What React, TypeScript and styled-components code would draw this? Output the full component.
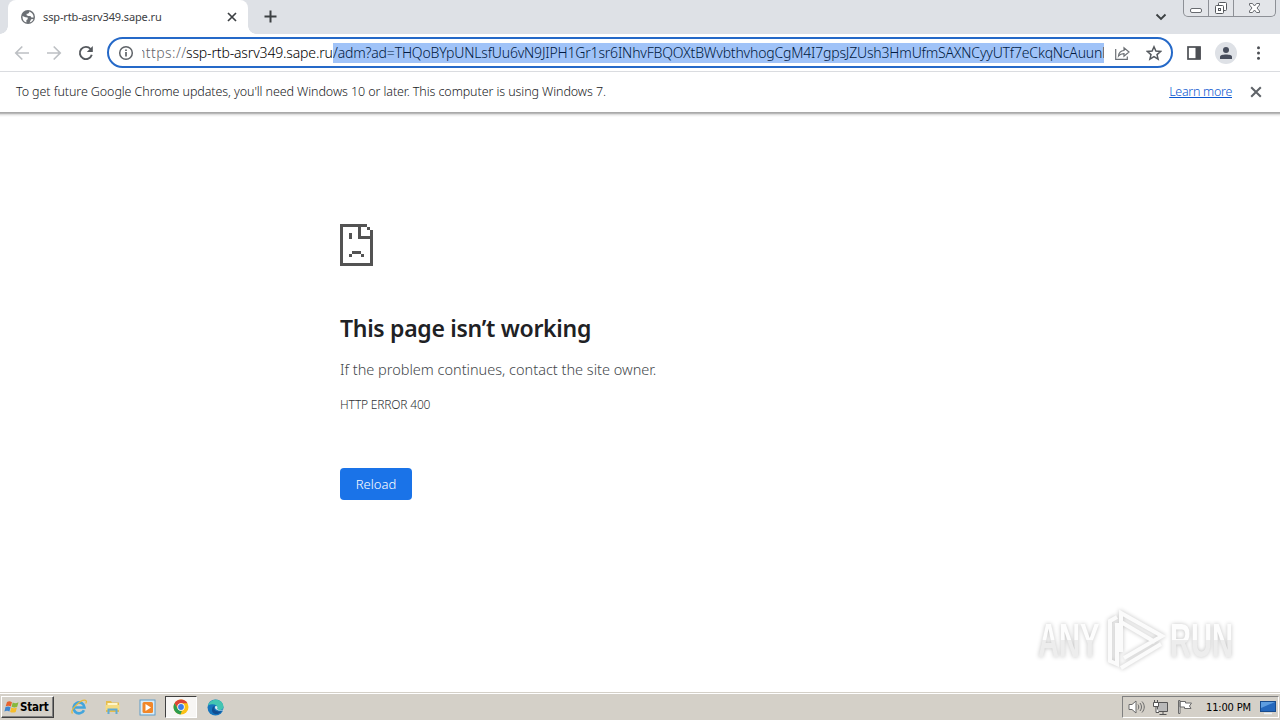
import React from 'react';
import styled, { createGlobalStyle } from 'styled-components';

const GlobalStyle = createGlobalStyle`
	* {
		box-sizing: border-box;
	}

	body {
		margin: 0;
		overflow: hidden;
		background: #fff;
	}

	svg {
		display: block;
		flex: none;
	}
`;

const uiFont = `'Noto Sans', 'Open Sans', sans-serif`;
const tahoma = `'DejaVu Sans Condensed', 'DejaVu Sans', sans-serif`;

const Screen = styled.div`
	display: flex;
	flex-direction: column;
	width: 1280px;
	height: 720px;
	font-family: ${uiFont};
	background: #fff;
`;

/* ---------- tab strip ---------- */

const TabStrip = styled.header`
	display: flex;
	align-items: flex-start;
	height: 34px;
	background: #dee1e6;
`;

const TabCorner = styled.div<{ $side: 'left' | 'right' }>`
	align-self: flex-end;
	width: 8px;
	height: 8px;
	background: radial-gradient(
		circle at ${(props) => (props.$side === 'left' ? '0 0' : '100% 0')},
		#dee1e6 7.5px,
		#fff 8px
	);
`;

const Tab = styled.div`
	display: flex;
	align-items: center;
	width: 240px;
	height: 34px;
	padding: 0 11px 0 13px;
	border-radius: 8px 8px 0 0;
	background: #fff;
`;

const TabTitle = styled.span`
	flex: 1;
	margin-left: 8px;
	font-size: 11px;
	line-height: 16px;
	letter-spacing: -0.14px;
	white-space: nowrap;
	color: #3c4043;
`;

const NewTab = styled.div`
	margin: 10px auto 0 8px;
`;

const TabSearch = styled.div`
	margin: 13px 16px 0 0;
`;

const WindowControls = styled.div`
	display: flex;
	width: 93px;
	height: 17px;
	margin-right: 4px;
	border: 1px solid #8d9096;
	border-top: 0;
	border-radius: 0 0 5px 5px;
	background: #e3e5e9;
`;

const WindowButton = styled.div<{ $width: number }>`
	display: flex;
	align-items: center;
	justify-content: center;
	width: ${(props) => props.$width}px;

	& + & {
		border-left: 1px solid #8d9096;
	}
`;

/* ---------- toolbar ---------- */

const Toolbar = styled.div`
	display: flex;
	align-items: center;
	height: 38px;
	padding: 0 12px 0 13px;
	border-bottom: 1px solid #dadce0;
`;

const NavButtons = styled.div`
	display: flex;
	flex: none;
	gap: 14px;
	width: 94px;
`;

const Omnibox = styled.div`
	display: flex;
	flex: none;
	align-items: center;
	width: 1066px;
	height: 31px;
	padding: 0 9px;
	border: 2px solid #2569c8;
	border-radius: 16px;
	background: #fff;
`;

const Url = styled.div`
	display: flex;
	width: 962px;
	height: 20px;
	margin-left: 8px;
	overflow: hidden;
	font-size: 14px;
	font-weight: 300;
	line-height: 20px;
	white-space: nowrap;
`;

// the field is scrolled a little, so the scheme starts before its left edge
const Scheme = styled.span`
	flex: none;
	width: 49px;
	margin-left: -5px;
	letter-spacing: 0.45px;
	color: #5f6368;
`;

const Host = styled.span`
	flex: none;
	width: 147px;
	letter-spacing: -0.15px;
	color: #000;
`;

const SelectedPath = styled.span`
	flex: 1;
	overflow: hidden;
	letter-spacing: -0.18px;
	color: #001a40;
	background: #a0c3f8;
`;

const OmniboxActions = styled.div`
	display: flex;
	align-items: center;
	gap: 16px;
	margin-left: 10px;
`;

const ToolbarActions = styled.div`
	display: flex;
	flex: none;
	align-items: center;
	gap: 13px;
	margin-left: 13px;
`;

const Avatar = styled.div`
	display: flex;
	align-items: center;
	justify-content: center;
	width: 22px;
	height: 22px;
	border-radius: 50%;
	background: #dee1e6;
`;

/* ---------- info bar ---------- */

const InfoBar = styled.div`
	display: flex;
	align-items: center;
	height: 40px;
	padding: 0 18px 0 16px;
	font-size: 12.5px;
	font-weight: 300;
	line-height: 18px;
	color: #202124;
`;

const InfoText = styled.span`
	margin-right: auto;
	letter-spacing: -0.09px;
	white-space: nowrap;
`;

const LearnMore = styled.a`
	margin-right: 18px;
	letter-spacing: -0.3px;
	white-space: nowrap;
	color: #0b57d0;
	text-decoration: underline;
`;

const InfoShadow = styled.div`
	height: 5px;
	background: linear-gradient(#a9a9a9 0 1px, #b8b8b8 1px 2px, #dedede 2px 3px, #f0f0f0 3px 4px, #fafafa 4px);
`;

/* ---------- error page ---------- */

const Page = styled.main`
	position: relative;
	flex: 1;
	padding: 107px 0 0 340px;
`;

const Title = styled.h1`
	margin: 46px 0 0;
	font-size: 23px;
	font-weight: 600;
	line-height: 32px;
	letter-spacing: -0.3px;
	color: #202124;
`;

const Message = styled.p`
	margin: 14px 0 0;
	font-size: 14.5px;
	font-weight: 300;
	line-height: 22px;
	color: #43474b;
`;

const ErrorCode = styled.p`
	margin: 16px 0 0;
	font-size: 12px;
	font-weight: 300;
	line-height: 18px;
	letter-spacing: -0.2px;
	color: #303336;
`;

const ReloadButton = styled.button`
	display: block;
	width: 72px;
	height: 32px;
	margin-top: 54px;
	padding: 0;
	border: 0;
	border-radius: 4px;
	background: #1a73e8;
	font-family: inherit;
	font-size: 13px;
	font-weight: 300;
	color: #fff;
`;

// the recording watermark floats over the page
const Watermark = styled.div`
	position: absolute;
	right: 44px;
	bottom: 20px;
	display: flex;
	align-items: center;
	width: 198px;
	height: 64px;
	filter: drop-shadow(0 0 2px rgba(0, 0, 0, 0.24));
`;

const WatermarkWord = styled.span`
	flex: none;
	width: 112px;
	margin-right: -44px;
	font-family: 'Liberation Sans', sans-serif;
	font-size: 49px;
	font-weight: 700;
	line-height: 66px;
	color: transparent;
	background: linear-gradient(#fdfdfd 50%, #ededed 50%);
	background-clip: text;
	transform: scaleX(0.595);
	transform-origin: 0 50%;
`;

/* ---------- taskbar ---------- */

const Taskbar = styled.footer`
	display: flex;
	align-items: center;
	height: 28px;
	padding: 1px 1px 0;
	border-top: 1px solid #d4d0c8;
	box-shadow: inset 0 1px #fff;
	background: #d4d0c8;
`;

const StartButton = styled.div`
	display: flex;
	align-items: center;
	width: 53px;
	height: 22px;
	margin-right: 9px;
	padding-left: 2px;
	border: 1px solid;
	border-color: #fff #404040 #404040 #fff;
	box-shadow: inset -1px -1px #808080;
	font-family: ${tahoma};
	font-size: 11.5px;
	font-weight: 700;
	letter-spacing: -0.2px;
	color: #000;
`;

const TaskItem = styled.div<{ $active?: boolean }>`
	display: flex;
	align-items: center;
	justify-content: center;
	width: 32px;
	height: 22px;
	margin-right: 2px;
	border: 1px solid transparent;
	${(props) =>
		props.$active &&
		`
		border-color: #404040 #fff #fff #404040;
		background: #f7f6f4;
	`}
`;

const Tray = styled.div`
	display: flex;
	align-items: center;
	gap: 7px;
	width: 157px;
	height: 22px;
	margin-left: auto;
	padding: 0 2px 0 5px;
	border: 1px solid;
	border-color: #808080 #fff #fff #808080;
`;

const Clock = styled.span`
	width: 47px;
	margin-left: 6px;
	font-family: ${tahoma};
	font-size: 11px;
	letter-spacing: -0.15px;
	white-space: nowrap;
	color: #000;
`;

const CloseIcon: React.FC<{ size: number; color: string }> = ({ size, color }) => (
	<svg width={size} height={size} viewBox="0 0 10 10">
		<path d="M1 1l8 8M9 1L1 9" stroke={color} strokeWidth="1.7" />
	</svg>
);

const App: React.FC = () => {
	return (
		<>
			<GlobalStyle />
			<Screen>
				<TabStrip>
					<TabCorner $side="left" />
					<Tab>
						<svg width="14" height="14" viewBox="0 0 14 14">
							<circle cx="7" cy="7" r="7" fill="#6b6f74" />
							<path
								d="M1.5 6l3 1.2 2.2.3v1.7L5.4 10v2.6C3 12 1.3 9.8 1.5 6zM8.2 1.5v1L7 3.8H5.6v1.5l1.5.8h2.3l1 1.3h2.2c.1-2.6-1.6-5-4.4-5.9zM8.6 12.5c2-.6 3.3-2 3.8-3.6l-2.3.3z"
								fill="#fff"
							/>
						</svg>
						<TabTitle>ssp-rtb-asrv349.sape.ru</TabTitle>
						<CloseIcon size={10} color="#3c4043" />
					</Tab>
					<TabCorner $side="right" />
					<NewTab>
						<svg width="13" height="13" viewBox="0 0 13 13">
							<path d="M6.5 .5v12M.5 6.5h12" stroke="#3c4043" strokeWidth="2" />
						</svg>
					</NewTab>
					<TabSearch>
						<svg width="12" height="8" viewBox="0 0 12 8">
							<path d="M1.5 1.5L6 6l4.5-4.5" fill="none" stroke="#3c4043" strokeWidth="1.9" />
						</svg>
					</TabSearch>
					<WindowControls>
						<WindowButton $width={24}>
							<svg width="14" height="17" viewBox="0 0 14 17">
								<rect x="1.5" y="8.5" width="11" height="4" rx="1.5" fill="#fff" stroke="#686b70" />
							</svg>
						</WindowButton>
						<WindowButton $width={25}>
							<svg width="14" height="17" viewBox="0 0 14 17">
								<rect x="4.5" y="2.5" width="8" height="8" rx="1" fill="#fff" stroke="#55585d" />
								<rect x="1.5" y="5.5" width="8" height="8" rx="1" fill="#fff" stroke="#55585d" />
								<rect x="4.5" y="8.5" width="2" height="2" fill="none" stroke="#55585d" />
							</svg>
						</WindowButton>
						<WindowButton $width={42}>
							<svg width="13" height="17" viewBox="0 0 13 17">
								<path
									d="M1.5 3.5h3l2 2.5 2-2.5h3V5L9 8l2.5 3v1.5h-3l-2-2.5-2 2.5h-3V11L4 8 1.5 5z"
									fill="#fff"
									stroke="#686b70"
								/>
							</svg>
						</WindowButton>
					</WindowControls>
				</TabStrip>

				<Toolbar>
					<NavButtons>
						<svg width="18" height="18" viewBox="0 0 18 18">
							<path d="M16 9H3M9.3 2.5L2.8 9l6.5 6.5" fill="none" stroke="#bdc0c4" strokeWidth="1.7" />
						</svg>
						<svg width="18" height="18" viewBox="0 0 18 18">
							<path d="M2 9h13M8.7 2.5L15.2 9l-6.5 6.5" fill="none" stroke="#bdc0c4" strokeWidth="1.7" />
						</svg>
						<svg width="18" height="18" viewBox="0 0 18 18">
							<path d="M14.8 10.8A6.1 6.1 0 1 1 13.6 5" fill="none" stroke="#55595e" strokeWidth="1.9" />
							<path d="M15.8 2v6H9.8z" fill="#55595e" />
						</svg>
					</NavButtons>
					<Omnibox>
						<svg width="16" height="16" viewBox="0 0 16 16">
							<circle cx="8" cy="8" r="6.3" fill="none" stroke="#5f6368" strokeWidth="1.5" />
							<path d="M8 7v4.5M8 4.5v1.6" stroke="#5f6368" strokeWidth="1.7" />
						</svg>
						<Url>
							<Scheme>https://</Scheme>
							<Host>ssp-rtb-asrv349.sape.ru</Host>
							<SelectedPath>
								/adm?ad=THQoBYpUNLsfUu6vN9JIPH1Gr1sr6INhvFBQOXtBWvbthvhogCgM4I7gpsJZUsh3HmUfmSAXNCyyUTf7eCkqNcAuunl
							</SelectedPath>
						</Url>
						<OmniboxActions>
							<svg width="16" height="16" viewBox="0 0 16 16">
								<path
									d="M1.7 4v10.3h11.6V11.5M4.5 11c.3-3.5 2.2-5.2 5.5-5.5V2.7L15 7l-5 4.3V8.6c-2.5 0-4.2.7-5.5 2.4z"
									fill="none"
									stroke="#6b6f74"
									strokeWidth="1.2"
								/>
							</svg>
							<svg width="16" height="16" viewBox="0 0 16 16">
								<path
									d="M8 1.8l1.9 4.3 4.7.4-3.6 3.1 1.1 4.6L8 11.7l-4.1 2.5L5 9.6 1.4 6.5l4.7-.4z"
									fill="none"
									stroke="#55595e"
									strokeWidth="1.5"
								/>
							</svg>
						</OmniboxActions>
					</Omnibox>
					<ToolbarActions>
						<svg width="16" height="16" viewBox="0 0 16 16">
							<rect x="2" y="2" width="12" height="12" fill="none" stroke="#4c4f54" strokeWidth="1.7" />
							<rect x="9.5" y="2" width="5" height="12" fill="#4c4f54" />
						</svg>
						<Avatar>
							<svg width="12" height="12" viewBox="0 0 12 12">
								<circle cx="6" cy="3" r="3" fill="#474d5c" />
								<path d="M0 12V9.7C0 6.8 12 6.8 12 9.7V12z" fill="#474d5c" />
							</svg>
						</Avatar>
						<svg width="18" height="16" viewBox="0 0 18 16">
							<circle cx="8.5" cy="2.7" r="1.5" fill="#4c4f54" />
							<circle cx="8.5" cy="8" r="1.5" fill="#4c4f54" />
							<circle cx="8.5" cy="13.3" r="1.5" fill="#4c4f54" />
						</svg>
					</ToolbarActions>
				</Toolbar>

				<InfoBar>
					<InfoText>
						To get future Google Chrome updates, you'll need Windows 10 or later. This computer is using Windows 7.
					</InfoText>
					<LearnMore>Learn more</LearnMore>
					<CloseIcon size={12} color="#5f6368" />
				</InfoBar>
				<InfoShadow />

				<Page>
					<svg width="33" height="42" viewBox="0 0 11 14" shapeRendering="crispEdges" fill="#535353">
						<path d="M0 0h9v1H1v12h9V5H6V1h1v3h3V2h1v12H0z" />
						<path d="M9 1h1v1H9zM3 3h1v2H3zM3 10h1v1H3zM4 9h3v1H4zM7 10h1v1H7z" />
					</svg>
					<Title>This page isn’t working</Title>
					<Message>If the problem continues, contact the site owner.</Message>
					<ErrorCode>HTTP ERROR 400</ErrorCode>
					<ReloadButton>Reload</ReloadButton>
					<Watermark>
						<WatermarkWord>ANY</WatermarkWord>
						<svg width="64" height="64" viewBox="0 0 64 64" fill="none" stroke="#fbfbfb" strokeWidth="4">
							<path d="M15 44V5l41 23-38 22M15 14l34 20" />
							<path d="M11 9L4 13v40l7 3V15M15 60l40-24" />
						</svg>
						<WatermarkWord>RUN</WatermarkWord>
					</Watermark>
				</Page>

				<Taskbar>
					<StartButton>
						<svg width="16" height="16" viewBox="0 0 16 16">
							<path d="M3 3c2-1 3-.8 5 .2L6.8 7.5C5 6.5 3.7 6.5 1.7 7.3z" fill="#e8632c" />
							<path d="M8.7 3.5c2 .9 3.5.9 5.8-.2L13.2 7.7c-2 .9-3.6.9-5.6 0z" fill="#86b83b" />
							<path d="M1.5 8.1c2-.8 3.4-.8 5.1.2L5.4 12.5c-1.8-1-3-.9-5 0z" fill="#3f86cf" />
							<path d="M7.3 8.6c2 .9 3.6.9 5.6 0l-1.2 4.3c-2 .9-3.6.9-5.6 0z" fill="#f6bd2b" />
						</svg>
						Start
					</StartButton>
					<TaskItem>
						<svg width="18" height="18" viewBox="0 0 18 18" fill="none">
							<path d="M14 12.2A5.5 5.5 0 1 1 14.5 9.5H5" stroke="#43a5dc" strokeWidth="2.6" />
							<path d="M2.5 15.5C-.5 12 11 1 15.5 2.3c1.3.4 1 2 .2 3.2" stroke="#e7b93c" strokeWidth="1.3" />
						</svg>
					</TaskItem>
					<TaskItem>
						<svg width="18" height="18" viewBox="0 0 18 18">
							<path d="M2 3h5l1 1.5h7V14H2z" fill="#e6bd4c" />
							<path d="M3.5 5h10v5h-10z" fill="#fff6c9" />
							<path d="M1.5 7h14v5h-14z" fill="#f5dc82" />
							<path d="M4.5 16v-4.5h8V16" fill="none" stroke="#61abd4" strokeWidth="2" />
						</svg>
					</TaskItem>
					<TaskItem>
						<svg width="17" height="17" viewBox="0 0 17 17">
							<rect x="1" y="1" width="15" height="15" fill="#d9ecf8" stroke="#5f9cc8" />
							<rect x="3.5" y="3" width="10.5" height="11" rx="1.5" fill="#f1872a" />
							<path d="M6.5 5l5.5 3.5L6.5 12z" fill="#fff" />
						</svg>
					</TaskItem>
					<TaskItem $active>
						<svg width="16" height="16" viewBox="0 0 16 16">
							<circle cx="8" cy="8" r="7.5" fill="#fbc116" />
							<path d="M1.5 4.3A7.5 7.5 0 0 1 14.5 4.3H8A3.7 3.7 0 0 0 4.8 9.8z" fill="#dc4437" />
							<path d="M1.5 4.3L4.8 9.8A3.7 3.7 0 0 0 9 11.6L7.5 15.5A7.5 7.5 0 0 1 1.5 4.3z" fill="#2c9c4f" />
							<circle cx="8" cy="8" r="3.7" fill="#fff" />
							<circle cx="8" cy="8" r="2.9" fill="#3c7de8" />
						</svg>
					</TaskItem>
					<TaskItem>
						<svg width="17" height="17" viewBox="0 0 17 17">
							<circle cx="8.5" cy="8.5" r="8" fill="#1674bd" />
							<path d="M1 6.5C3-1 16-1.5 16.5 8c0 3-4.5 4-6.5 2.5C12 6 6 3.5 1 6.5z" fill="#43c5b2" />
							<path d="M8 6.5c-3 3 1 7.5 6.5 5.5-3 5-10 3.5-9.5-1.5.2-2 1.3-3.3 3-4z" fill="#124d91" />
							<path d="M8.5 7c-1.5 2 .5 4.5 4.5 4.5h3.5c.3-1.5-2-.5-3.5-.5-3 0-3-1.5-2.5-2.5 0-1-1-1.7-2-1.5z" fill="#e0eef2" />
						</svg>
					</TaskItem>
					<Tray>
						<svg width="17" height="16" viewBox="0 0 17 16" fill="none" stroke="#6a6a6a">
							<path d="M1 5.5h3L8 2v12l-4-3.5H1z" fill="#fff" />
							<path d="M10 5.5c1 1.5 1 3.5 0 5M12 4c2 2.5 2 5.5 0 8M14 2.5c3 3.5 3 7.5 0 11" />
						</svg>
						<svg width="17" height="17" viewBox="0 0 17 17" stroke="#555">
							<path d="M5.5 3.5h10v9h-10z" fill="#b9b9b9" />
							<path d="M7.5 15.5h7M11 12.5v3" />
							<path d="M1.5 3.5h5v4h-5zM2.5 1v2.5M5.5 1v2.5M4 7.5v6h3" fill="#fff" />
						</svg>
						<svg width="17" height="16" viewBox="0 0 17 16" stroke="#6a6a6a">
							<path d="M2.5 1.5H4v13H2.5zM4 2.5h5.5V4h6l-2 3 1.5 2.5H8.5V8H4z" fill="#fff" />
						</svg>
						<Clock>11:00 PM</Clock>
						<svg width="16" height="16" viewBox="0 0 16 16">
							<rect x=".5" y="2.5" width="15" height="10" fill="#2468bd" stroke="#174b8d" />
							<path d="M1 3h14L1 9z" fill="#5d9de0" />
							<path d="M4 14.5h8" stroke="#e9f0f7" strokeWidth="1.5" />
						</svg>
					</Tray>
				</Taskbar>
			</Screen>
		</>
	);
};

export default App;
